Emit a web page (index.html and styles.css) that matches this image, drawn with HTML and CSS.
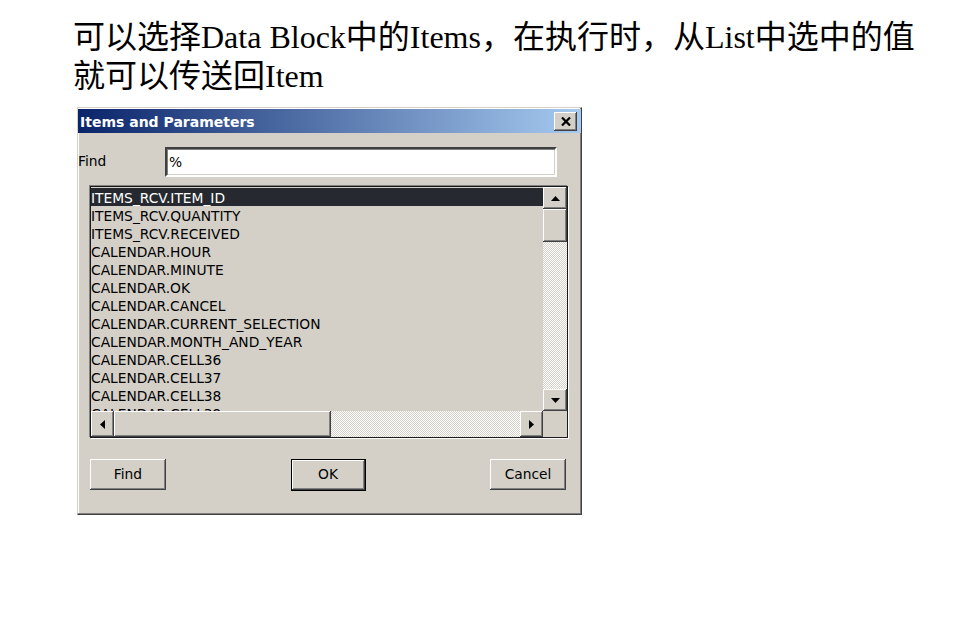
FILE: index.html
```html
<!DOCTYPE html>
<html lang="zh">
<head>
<meta charset="utf-8">
<title>Items and Parameters</title>
<link rel="stylesheet" href="styles.css">
</head>
<body>
<div class="page">
  <p class="intro">可以选择Data Block中的Items，在执行时，从List中选中的值<br>就可以传送回Item</p>
  <div class="dialog">
    <div class="titlebar">
      <span class="title">Items and Parameters</span>
      <div class="close raised">
        <svg width="10" height="9" viewBox="0 0 10 9"><path d="M1 0.5 L9 8.5 M9 0.5 L1 8.5" stroke="#000" stroke-width="2.2" fill="none"/></svg>
      </div>
    </div>
    <div class="find-row">
      <span class="label">Find</span>
      <div class="input">%</div>
    </div>
    <div class="listbox">
      <ul class="items">
        <li class="selected">ITEMS_RCV.ITEM_ID</li>
        <li>ITEMS_RCV.QUANTITY</li>
        <li>ITEMS_RCV.RECEIVED</li>
        <li>CALENDAR.HOUR</li>
        <li>CALENDAR.MINUTE</li>
        <li>CALENDAR.OK</li>
        <li>CALENDAR.CANCEL</li>
        <li>CALENDAR.CURRENT_SELECTION</li>
        <li>CALENDAR.MONTH_AND_YEAR</li>
        <li>CALENDAR.CELL36</li>
        <li>CALENDAR.CELL37</li>
        <li>CALENDAR.CELL38</li>
        <li>CALENDAR.CELL39</li>
      </ul>
      <div class="vscroll">
        <div class="sbtn raised"><svg width="9" height="5" viewBox="0 0 9 5"><path d="M4.5 0 L9 5 L0 5 Z" fill="#000"/></svg></div>
        <div class="vthumb raised"></div>
        <div class="track"></div>
        <div class="sbtn raised"><svg width="9" height="5" viewBox="0 0 9 5"><path d="M0 0 L9 0 L4.5 5 Z" fill="#000"/></svg></div>
      </div>
      <div class="hscroll">
        <div class="hbtn raised"><svg width="5" height="9" viewBox="0 0 5 9"><path d="M5 0 L5 9 L0 4.5 Z" fill="#000"/></svg></div>
        <div class="hthumb raised"></div>
        <div class="track"></div>
        <div class="hbtn raised"><svg width="5" height="9" viewBox="0 0 5 9"><path d="M0 0 L5 4.5 L0 9 Z" fill="#000"/></svg></div>
      </div>
      <div class="corner"></div>
    </div>
    <div class="buttons">
      <div class="btn raised">Find</div>
      <div class="btn-default"><div class="btn raised">OK</div></div>
      <div class="btn raised">Cancel</div>
    </div>
  </div>
</div>
</body>
</html>
```

FILE: styles.css
```css
html, body {
  margin: 0;
  padding: 0;
  background: #ffffff;
}

.page {
  width: 955px;
  height: 628px;
  overflow: hidden;
}

.intro {
  margin: 0;
  padding: 18px 0 0 73px;
  font-family: "Liberation Serif", "Noto Sans CJK SC", serif;
  font-size: 32px;
  line-height: 39px;
  color: #000;
  white-space: nowrap;
}

.dialog {
  margin: 11px 0 0 77px;
  width: 505px;
  height: 408px;
  box-sizing: border-box;
  background: #d4d0c8;
  border: 1px solid;
  border-color: #d4d0c8 #404040 #404040 #d4d0c8;
  box-shadow: inset -1px -1px 0 #808080, inset 1px 1px 0 #ffffff;
  font-family: "DejaVu Sans", sans-serif;
  font-size: 13.8px;
  color: #000;
}

.raised {
  background: #d4d0c8;
  box-shadow: inset -1px -1px 0 #404040, inset 1px 1px 0 #ffffff,
              inset -2px -2px 0 #808080, inset 2px 2px 0 #d4d0c8;
  box-sizing: border-box;
}

.titlebar {
  margin-top: 1px;
  height: 24px;
  display: flex;
  align-items: center;
  justify-content: space-between;
  background: linear-gradient(to right, #0a246a, #a6caf0);
}

.title {
  padding: 2px 0 0 2px;
  color: #ffffff;
  font-weight: bold;
  font-size: 14px;
}

.close {
  width: 23px;
  height: 19px;
  margin-right: 4px;
  display: flex;
  align-items: center;
  justify-content: center;
}

.find-row {
  margin-top: 14px;
  height: 30px;
  display: flex;
  align-items: center;
}

.label {
  width: 87px;
  margin-top: -2px;
}

.input {
  width: 392px;
  height: 30px;
  box-sizing: border-box;
  background: #ffffff;
  border: 2px solid;
  border-color: #404040 #ffffff #ffffff #404040;
  box-shadow: inset 1px 1px 0 #808080, inset -1px -1px 0 #d4d0c8;
  padding: 3px 0 0 2px;
  line-height: 20px;
}

.listbox {
  margin: 9px 0 0 12px;
  width: 478px;
  height: 252px;
  box-sizing: border-box;
  border: 1px solid #1a1a1a;
  box-shadow: -1px -1px 0 #808080, 1px 1px 0 #ffffff;
  display: grid;
  grid-template-columns: 1fr 24px;
  grid-template-rows: 1fr 26px;
  overflow: hidden;
}

.items {
  list-style: none;
  margin: 0;
  padding: 1px 0 0 0;
  overflow: hidden;
}

.items li {
  height: 18px;
  line-height: 20px;
  white-space: nowrap;
}

.items li.selected {
  background: #262a30;
  color: #ffffff;
}

.vscroll {
  display: flex;
  flex-direction: column;
}

.sbtn {
  height: 22px;
  display: flex;
  align-items: center;
  justify-content: center;
}

.vthumb {
  height: 33px;
}

.track {
  flex: 1;
  background: repeating-conic-gradient(#ffffff 0 25%, #d4d0c8 0 50%) 0 0 / 2px 2px;
}

.hscroll {
  display: flex;
}

.hbtn {
  width: 23px;
  display: flex;
  align-items: center;
  justify-content: center;
}

.hthumb {
  width: 217px;
}

.corner {
  background: #d4d0c8;
}

.buttons {
  margin: 21px 0 0 12px;
  width: 476px;
  display: flex;
  justify-content: space-between;
  align-items: flex-start;
}

.btn {
  width: 76px;
  height: 31px;
  display: flex;
  align-items: center;
  justify-content: center;
  padding-bottom: 2px;
}

.btn-default {
  width: 75px;
  height: 32px;
  box-sizing: border-box;
  border: 1px solid #000;
}

.btn-default .btn {
  width: 73px;
  height: 30px;
}
```
